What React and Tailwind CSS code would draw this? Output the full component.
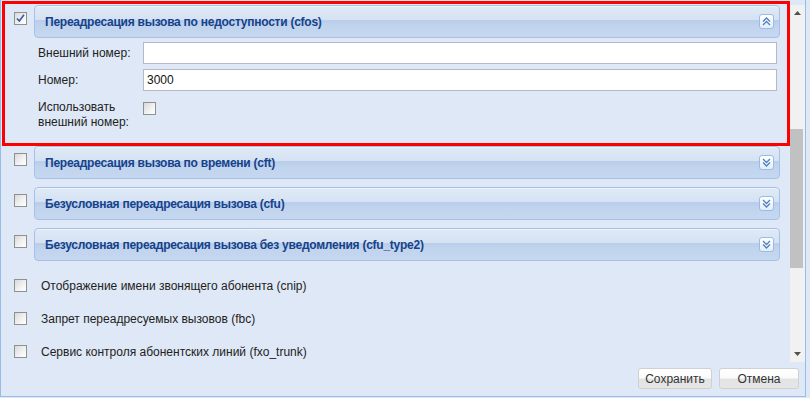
import React from 'react';

const font = { fontFamily: '"Liberation Sans", Arial, sans-serif' };

const CheckBox = ({ checked = false }) => (
    <div className="w-[13px] h-[13px] shrink-0 border border-[#8f9090] bg-[linear-gradient(135deg,#d9d9d9_0%,#f3f3f3_60%,#ffffff_100%)] flex items-center justify-center">
        {checked && (
            <svg width="11" height="11" viewBox="0 0 11 11">
                <path d="M2 5.5 L4.3 8 L9 1.8" fill="none" stroke="#3a58a6" strokeWidth="1.6" />
            </svg>
        )}
    </div>
);

const ToolButton = ({ up = false }) => (
    <div className="w-[15px] h-[15px] ml-auto rounded-[3px] border border-[#99bbe8] bg-[linear-gradient(to_bottom,#ffffff,#e4edf8)] flex items-center justify-center">
        <svg width="9" height="9" viewBox="0 0 9 9">
            {up ? (
                <path d="M1 4.5 L4.5 1 L8 4.5 M1 8 L4.5 4.5 L8 8" fill="none" stroke="#4f80c2" strokeWidth="1.3" />
            ) : (
                <path d="M1 1 L4.5 4.5 L8 1 M1 4.5 L4.5 8 L8 4.5" fill="none" stroke="#4f80c2" strokeWidth="1.3" />
            )}
        </svg>
    </div>
);

const PanelHeader = ({ title, expanded }) => (
    <div className="h-[33px] rounded-[4px] border border-[#a6c1e6] bg-[linear-gradient(to_bottom,#e0eaf6_0%,#d5e2f3_44%,#b8cdea_47%,#c0d3ed_60%,#c6d8f0_100%)] shadow-[inset_0_1px_0_#eef4fb] flex items-center pl-[10px] pr-[5px]">
        <span className="text-[12px] tracking-[-0.25px] font-bold text-[#15428b]">{title}</span>
        <ToolButton up={expanded} />
    </div>
);

const collapsed = [
    'Переадресация вызова по времени (cft)',
    'Безусловная переадресация вызова (cfu)',
    'Безусловная переадресация вызова без уведомления (cfu_type2)',
];

const options = [
    'Отображение имени звонящего абонента (cnip)',
    'Запрет переадресуемых вызовов (fbc)',
    'Сервис контроля абонентских линий (fxo_trunk)',
];

const Field = ({ label, value }) => (
    <div className="flex items-center h-[22px]">
        <div className="w-[105px] text-[12px] text-[#222]">{label}</div>
        <div className="w-[634px] h-[22px] bg-white border border-[#b5b8c8] px-[3px] flex items-center text-[12px] text-[#111]">
            {value}
        </div>
    </div>
);

const App = () => {
    return (
        <div className="w-[810px] h-[398px] bg-[#dfe8f6] overflow-hidden" style={font}>
            <div className="w-[806px] h-[397px] border-l border-r border-b border-[#99bbe8] flex flex-col">
                <div className="h-[362px] flex relative">
                    {/* content */}
                    <div className="w-[789px] pt-[5px] flex flex-col">
                        <div className="flex">
                            <div className="w-[33px] pl-[13px] pt-[7px]"><CheckBox checked /></div>
                            <div className="w-[746px] flex flex-col">
                                <PanelHeader title="Переадресация вызова по недоступности (cfos)" expanded />
                                <div className="pl-[4px] pt-[4px] pb-[7px] flex flex-col gap-[5px]">
                                    <Field label="Внешний номер:" value="" />
                                    <Field label="Номер:" value="3000" />
                                    <div className="flex mt-[4px]">
                                        <div className="w-[105px] text-[12px] leading-[15px] text-[#222]">
                                            Использовать<br />внешний номер:
                                        </div>
                                        <div className="pt-[2px]"><CheckBox /></div>
                                    </div>
                                </div>
                            </div>
                        </div>

                        <div className="flex flex-col gap-[8px] mt-[9px]">
                            {collapsed.map((t) => (
                                <div key={t} className="flex">
                                    <div className="w-[33px] pl-[13px] pt-[7px]"><CheckBox /></div>
                                    <div className="w-[746px]"><PanelHeader title={t} /></div>
                                </div>
                            ))}
                        </div>

                        <div className="flex flex-col mt-[8px]">
                            {options.map((t) => (
                                <div key={t} className="h-[33px] flex items-center pl-[13px]">
                                    <CheckBox />
                                    <span className="ml-[14px] text-[12px] text-[#222]">{t}</span>
                                </div>
                            ))}
                        </div>
                    </div>

                    {/* scrollbar */}
                    <div className="w-[15px] mt-[5px] ml-[1px] bg-[#f1f1f1] flex flex-col items-center">
                        <div className="h-[16px] flex items-center justify-center w-full">
                            <svg width="7" height="4" viewBox="0 0 7 4"><path d="M0 4 L3.5 0 L7 4 Z" fill="#505050" /></svg>
                        </div>
                        <div className="w-[13px] self-start h-[139px] mt-[108px] bg-[#c1c1c1]" />
                        <div className="mt-auto h-[16px] flex items-center justify-center w-full">
                            <svg width="7" height="4" viewBox="0 0 7 4"><path d="M0 0 L3.5 4 L7 0 Z" fill="#505050" /></svg>
                        </div>
                    </div>

                    {/* highlight annotation */}
                    <div className="absolute left-[1px] top-[1px] w-[788px] h-[145px] border-[3px] border-[#ff0000] pointer-events-none" />
                </div>

                <div className="flex-1 flex justify-end items-start pt-[6px] pr-[6px] gap-[7px]">
                    <button className="w-[74px] h-[21px] rounded-[3px] border border-[#d0d0d0] bg-[linear-gradient(to_bottom,#ffffff_0%,#fbfbfb_48%,#e3e3e3_52%,#e6e6e6_100%)] text-[12px] text-[#333]">
                        Сохранить
                    </button>
                    <button className="w-[80px] h-[21px] rounded-[3px] border border-[#d0d0d0] bg-[linear-gradient(to_bottom,#ffffff_0%,#fbfbfb_48%,#e3e3e3_52%,#e6e6e6_100%)] text-[12px] text-[#333]">
                        Отмена
                    </button>
                </div>
            </div>
        </div>
    );
};

export default App;
